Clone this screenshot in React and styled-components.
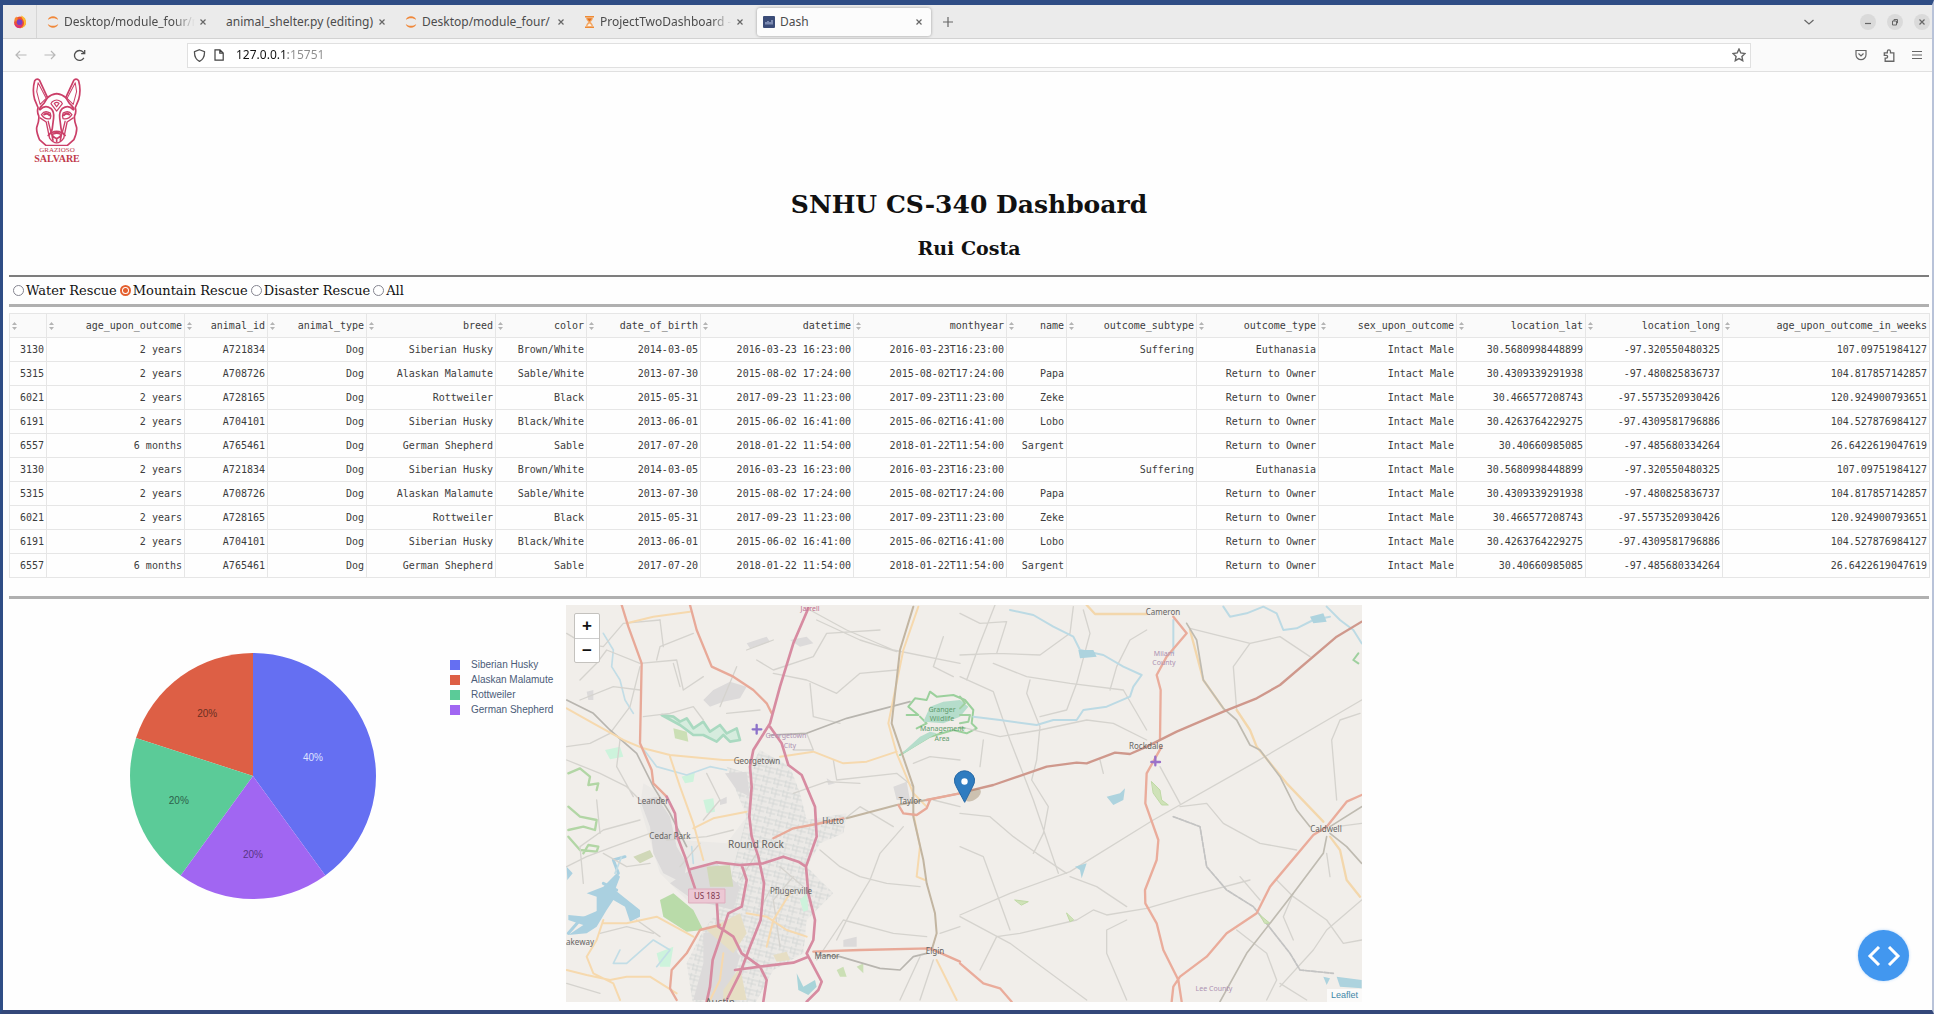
import React, { useState } from "react";
import styled, { createGlobalStyle, css } from "styled-components";

const UI_FONT = '"Noto Sans", "Open Sans", sans-serif';
const SERIF = '"DejaVu Serif", "Liberation Serif", serif';
const MONO = '"DejaVu Sans Mono", "Liberation Mono", monospace';
const SANS = '"Liberation Sans", sans-serif';

const GlobalStyle = createGlobalStyle`
  *, *::before, *::after { box-sizing: border-box; }
  body { margin: 0; background: #fefefe; }
  button { margin: 0; padding: 0; border: 0; background: none; color: inherit; font: inherit; cursor: pointer; }
  svg { display: block; flex: none; }
`;

const BrowserWindow = styled.div`
  display: flex;
  flex-direction: column;
  min-height: 100vh;
  border-style: solid;
  border-color: #2f4d85 #b9c3d9 #34487a #2f4d85;
  border-width: 5px 2px 4px 3px;
  background: #fefefe;
`;

/* ---------- browser chrome ---------- */

const TabBar = styled.div`
  display: flex;
  align-items: center;
  height: 34px;
  background: #ebebeb;
  border-bottom: 1px solid #d2d2d2;
  font: 12px/16px ${UI_FONT};
  color: #4c4c4c;
`;

const PinnedTab = styled.button`
  display: flex;
  align-items: center;
  justify-content: center;
  width: 34px;
  height: 33px;
  border-right: 1px solid #d6d6d6;
`;

const TabList = styled.div`
  display: flex;
  gap: 5px;
  margin-left: 4px;
`;

const Tab = styled.div`
  display: flex;
  align-items: center;
  width: 174px;
  height: 28px;
  padding: 0 7px 0 6px;
  border-radius: 3px;
  ${(p) =>
    p.$active &&
    css`
      background: #fcfcfc;
      box-shadow: 0 0 3px rgba(0, 0, 0, 0.35);
    `}
`;

const TabLabel = styled.button`
  display: flex;
  align-items: center;
  flex: 1;
  gap: 5px;
  min-width: 0;
  overflow: hidden;
  white-space: nowrap;
  ${(p) =>
    p.$fade &&
    css`
      mask-image: linear-gradient(to right, #000 84%, transparent 98%);
    `}
`;

const IconButton = styled.button`
  display: flex;
  align-items: center;
  justify-content: center;
  flex: none;
  width: ${(p) => p.$size || 16}px;
  height: ${(p) => p.$size || 16}px;
  color: ${(p) => p.$color || "#666"};
`;

const WindowControls = styled.div`
  display: flex;
  align-items: center;
  gap: 11px;
  margin-left: auto;
  padding-right: 2px;
`;

const RoundButton = styled(IconButton)`
  border-radius: 50%;
  background: #dadada;
`;

const MenuSlot = styled.div`
  margin-right: 32px;
`;

const Toolbar = styled.div`
  display: flex;
  align-items: center;
  height: 33px;
  padding: 0 7px 0 10px;
  background: #fafafa;
  border-bottom: 1px solid #e0e0e0;
`;

const NavButtons = styled.div`
  display: flex;
  gap: 13px;
  width: 174px;
`;

const AddressBar = styled.div`
  display: flex;
  align-items: center;
  flex: 1;
  height: 25px;
  padding: 0 3px;
  border: 1px solid #e0e0e0;
  background: #fff;
`;

const AddressInput = styled.input`
  flex: 1;
  min-width: 0;
  margin-left: 5px;
  padding: 0;
  border: 0;
  outline: 0;
  font: 12px/18px ${UI_FONT};
  color: transparent;
  background: linear-gradient(to right, #111 52px, #8c8c8c 52px);
  background-clip: text;
  caret-color: #222;
`;

const ToolbarActions = styled.div`
  display: flex;
  justify-content: flex-end;
  gap: 12px;
  width: 174px;
`;

/* ---------- dashboard page ---------- */

const Page = styled.main`
  flex: 1;
  padding: 6px 3px 8px 6px;
  font-family: ${SERIF};
  color: #111;
`;

const LogoLink = styled.a`
  display: flex;
  flex-direction: column;
  align-items: center;
  width: 50px;
  height: 88px;
  margin-left: 23px;
  color: #c0394a;
  font: bold 10px/10px "Liberation Serif", serif;
  text-decoration: none;
`;

const LogoSmall = styled.span`
  font-size: 7px;
  font-weight: normal;
  line-height: 8px;
`;

const Title = styled.h1`
  margin: 23px 0 15px;
  font-size: 25px;
  line-height: 32px;
  text-align: center;
`;

const Author = styled.h2`
  margin: 0 0 15px;
  font-size: 19px;
  line-height: 24px;
  text-align: center;
`;

const Rule = styled.hr`
  height: ${(p) => (p.$thick ? 3 : 2)}px;
  margin: ${(p) => p.$top || 0}px 0 ${(p) => p.$bottom || 0}px;
  border: 0;
  background: ${(p) => (p.$thick ? "#b0b0b0" : "#7d7d7d")};
`;

const RadioRow = styled.div`
  display: flex;
  align-items: center;
  gap: 3px;
  height: 27px;
  padding-left: 4px;
  font-size: 13px;
  line-height: 16px;
`;

const RadioLabel = styled.label`
  display: flex;
  align-items: center;
  gap: 2px;
`;

const Radio = styled.input`
  appearance: none;
  width: 11px;
  height: 11px;
  margin: 0;
  border: 1px solid #858590;
  border-radius: 50%;
  background: #fff;
  &:checked {
    border: 2px solid #e4602f;
    background: radial-gradient(circle, #e4602f 0 2px, #fff 3px);
  }
`;

const DataTable = styled.table`
  width: 100%;
  table-layout: fixed;
  border-collapse: collapse;
  font: 10px/12px ${MONO};
  color: #3c3c3c;
`;

const Col = styled.col`
  width: ${(p) => p.$w}px;
`;

const HeadCell = styled.th`
  height: 24px;
  padding: 0 2px;
  border: 1px solid #e6e6e6;
  background: #fafafa;
  font-weight: normal;
`;

const HeadContent = styled.div`
  display: flex;
  align-items: center;
  justify-content: space-between;
`;

const Cell = styled.td`
  height: 24px;
  padding: 0 2px;
  border: 1px solid #e6e6e6;
  text-align: right;
  white-space: nowrap;
`;

const Panels = styled.div`
  display: grid;
  grid-template-columns: 557fr 796fr 567fr;
`;

const ChartPanel = styled.section`
  display: flex;
  gap: 73px;
  padding: 47px 0 0 120px;
`;

const Legend = styled.ul`
  margin: 5px 0 0;
  padding: 0;
  list-style: none;
  font: 10px/15px ${SANS};
  color: #4b5c78;
`;

const LegendItem = styled.li`
  display: flex;
  align-items: center;
  gap: 11px;
  white-space: nowrap;
  &::before {
    content: "";
    width: 10px;
    height: 10px;
    background: ${(p) => p.$color};
  }
`;

const MapPanel = styled.section`
  position: relative;
  height: 397px;
  overflow: hidden;
  background: #f1eeea;
`;

const ZoomControls = styled.div`
  position: absolute;
  top: 8px;
  left: 8px;
  border: 1px solid #c4c2be;
  border-radius: 2px;
  background: #fff;
`;

const ZoomButton = styled.button`
  display: block;
  width: 24px;
  height: 24px;
  color: #111;
  font: bold 17px/24px ${SANS};
  & + & {
    border-top: 1px solid #ccc;
  }
`;

const Attribution = styled.a`
  position: absolute;
  right: 0;
  bottom: 0;
  padding: 0 4px;
  background: rgba(255, 255, 255, 0.7);
  color: #3e87a8;
  font: 9px/13px ${SANS};
  text-decoration: none;
`;

const DebugButton = styled.button`
  position: fixed;
  right: 25px;
  bottom: 33px;
  display: flex;
  align-items: center;
  justify-content: center;
  width: 51px;
  height: 51px;
  border-radius: 50%;
  background: #4297ef;
  box-shadow: 0 0 3px rgba(66, 151, 239, 0.4);
`;

/* ---------- icons ---------- */

const Stroke = ({ size = 12, w = 1.2, box = 12, children }) => (
  <svg width={size} height={size} viewBox={`0 0 ${box} ${box}`} fill="none" stroke="currentColor" strokeWidth={w}>
    {children}
  </svg>
);

const CloseIcon = () => (
  <Stroke size={8} box={8}>
    <path d="M1.5 1.5l5 5M6.5 1.5l-5 5" />
  </Stroke>
);

const FirefoxIcon = () => (
  <svg width="14" height="14" viewBox="0 0 14 14">
    <circle cx="7" cy="7.4" r="5.9" fill="#f0542f" />
    <path d="M8 .6c3.400 1.200 5.300 4 5 7.200-.5 3.300-3 5.400-6 5.500 3-1.200 4.500-3.500 4-6C10.600 5 8.600 3.600 8 .6z" fill="#fdbb30" />
    <path d="M1.500 4.500C2 3 3 2 3.400 1.600c.2 1 .7 1.700 1.500 2.100L3 7z" fill="#f7872c" />
    <circle cx="6.600" cy="7.200" r="2.900" fill="#7a3fc4" />
    <path d="M1.300 7.500c1 2.500 3 3.400 5.500 3 1.500-.3 2.500-1 3-2-.2 3-2 4.600-4.300 4.500-2.500-.3-4-2.500-4.200-5.500z" fill="#d9307a" />
  </svg>
);

const JupyterIcon = () => (
  <svg width="12" height="14" viewBox="0 0 12 14" fill="#f0883a">
    <path d="M.8 5C1.500 2.500 3.500 1.300 6 1.300S10.500 2.500 11.200 5C9.800 3.700 8 3.200 6 3.200S2.200 3.700.8 5z" />
    <path d="M.8 9c.7 2.500 2.700 3.700 5.200 3.700s4.500-1.200 5.200-3.700c-1.400 1.300-3.200 1.800-5.200 1.800S2.200 10.300.8 9z" />
  </svg>
);

const HourglassIcon = () => (
  <svg width="11" height="14" viewBox="0 0 11 14">
    <path d="M1 1h9v1.500H1zM1 11.500h9V13H1z" fill="#f08a32" />
    <path d="M2 2.500h7c0 2.500-1.500 3.500-2.500 4.500C7.500 8 9 9 9 11.500H2C2 9 3.500 8 4.500 7 3.500 6 2 5 2 2.500z" fill="#f3a765" />
    <path d="M3 3.500h5L5.500 6.500z" fill="#e2701c" />
    <path d="M3.500 11c.3-1.300 1-1.900 2-2.400 1 .5 1.700 1.100 2 2.400z" fill="#fff2e2" />
  </svg>
);

const DashIcon = () => (
  <svg width="12" height="12" viewBox="0 0 12 12">
    <rect width="12" height="12" rx="1" fill="#3b4c78" />
    <path d="M3 8.500V6M5 8.500V5M7 8.500V6M9 8.500V4" stroke="#a9b6da" strokeWidth="1.200" />
  </svg>
);

const DogLogo = () => (
  <svg width="50" height="68" viewBox="36 22 148 201" fill="none" stroke="#cb3f68" strokeWidth="5" strokeLinejoin="round" strokeLinecap="round">
    <path d="M82 80L58 28Q50 22 44 30Q36 58 44 86L54 110Q50 122 56 134Q58 148 50 168Q48 180 58 204L78 222H140L160 204Q170 182 168 168Q160 148 162 134Q168 122 164 110L174 86Q182 58 174 30Q168 22 160 28L136 80" />
    <path d="M54 36L50 62L60 100L78 82zM164 36L168 62L158 100L140 82z" strokeWidth="3" />
    <path d="M82 80Q92 70 109 68Q126 70 136 80L146 96M82 80L72 96Q62 104 58 114M146 96Q156 104 160 114" />
    <path d="M96 92Q109 82 122 92L126 98L109 120L92 98zM102 97Q109 91 116 97L109 107z" strokeWidth="3.500" />
    <path d="M60 116Q74 100 92 112Q102 122 100 140L96 172Q94 186 84 192M158 116Q144 100 126 112Q116 122 118 140L122 172Q124 186 134 192" />
    <path d="M64 130Q74 116 90 126Q94 136 90 142Q74 146 64 130zM154 130Q144 116 128 126Q124 136 128 142Q144 146 154 130z" strokeWidth="4" />
    <path d="M72 130Q80 124 88 132M146 130Q138 124 130 132" strokeWidth="6" />
    <path d="M60 140L78 152L88 200Q98 214 109 214Q120 214 130 200L140 152L158 140M84 150L92 182M134 150L126 182" strokeWidth="4" />
    <path d="M94 184Q109 176 124 184Q124 194 109 202Q94 194 94 184zM98 188Q109 182 120 188M109 202V210M94 184L98 206M124 184L120 206" strokeWidth="5" />
  </svg>
);

const SortIcon = () => (
  <svg width="5" height="8" viewBox="0 0 5 8" fill="#b4b4b4">
    <path d="M2.500 0L5 3H0zM2.500 8L5 5H0z" />
  </svg>
);

/* ---------- chart ---------- */

const BREEDS = [
  { name: "Siberian Husky", share: 40, color: "#656ff2", from: 0, text: "#dfe2ff" },
  { name: "Alaskan Malamute", share: 20, color: "#dd5f45", from: 80, text: "#6b2f22" },
  { name: "Rottweiler", share: 20, color: "#5bcb98", from: 60, text: "#2d614b" },
  { name: "German Shepherd", share: 20, color: "#a166f2", from: 40, text: "#583585" },
];

const polar = (pct, r) => {
  const a = (pct / 100) * Math.PI * 2;
  return [124 + Math.sin(a) * r, 124 - Math.cos(a) * r];
};

const PieChart = () => (
  <svg width="248" height="248" viewBox="0 0 248 248" role="img" aria-label="Breed share">
    {BREEDS.map((b) => {
      const [x1, y1] = polar(b.from, 123);
      const [x2, y2] = polar(b.from + b.share, 123);
      const [tx, ty] = polar(b.from + b.share / 2, b.share === 40 ? 63 : 78);
      return (
        <g key={b.name}>
          <path d={`M124 124L${x1} ${y1}A123 123 0 0 1 ${x2} ${y2}Z`} fill={b.color} />
          <text x={tx} y={ty + 4} textAnchor="middle" fontFamily={SANS} fontSize="10" fill={b.text}>
            {b.share}%
          </text>
        </g>
      );
    })}
  </svg>
);

/* ---------- map ---------- */

const PLACES = [
  ["Georgetown", 191, 159, 8],
  ["Leander", 87, 199, 8],
  ["Cedar Park", 104, 234, 8],
  ["Round Rock", 190, 243, 10],
  ["Hutto", 267, 219, 8],
  ["Pflugerville", 225, 289, 8],
  ["Taylor", 344, 199, 8],
  ["Manor", 261, 354, 8],
  ["Elgin", 369, 349, 8],
  ["Lakeway", 12, 340, 8],
  ["Austin", 154, 401, 10],
  ["Cameron", 597, 10, 8],
  ["Rockdale", 580, 144, 8],
  ["Caldwell", 760, 227, 8],
];

const MapDrawing = () => (
  <svg width="100%" height="100%" viewBox="0 0 796 397" preserveAspectRatio="xMidYMid slice" fill="none" strokeLinejoin="round" strokeLinecap="round">
    <defs>
      <pattern id="streets" width="34" height="30" patternUnits="userSpaceOnUse" patternTransform="rotate(14)">
        <path d="M0 6h34M8 0v20M20 6v24M8 18h26" stroke="#ccd2d0" strokeWidth="2.200" />
      </pattern>
    </defs>
    <g transform="translate(-6 -5) scale(.33333)">
      {/* built-up areas */}
      <path d="M500 500L560 520L600 450L690 500L720 580L740 660L860 640L850 700L780 730L740 800L820 880L740 960L730 1060L640 1110L580 1220H400L380 1090L430 990L380 900L300 820L270 720L240 620L250 550L320 590L360 720L500 730L560 650z" fill="#ebe9e6" />
      <path d="M500 500L560 520L600 450L690 500L720 580L740 660L860 640L850 700L780 730L740 800L820 880L740 960L730 1060L640 1110L580 1220H400L380 1090L430 990L500 900L520 800L560 650z" fill="url(#streets)" />
      <g fill="#dcdada">
        <path d="M430 300L460 270L510 245L560 260L540 295L490 305L450 320z" />
        <path d="M240 600L290 590L330 650L350 740L380 790L370 850L310 820L280 760L270 680z" />
        <path d="M495 520L560 515L570 590L530 570zM330 850L390 810L470 790L540 860L520 930L400 900zM430 1000L490 990L540 1070L500 1200H400L430 1090z" />
        <path d="M560 130L620 110L630 125L570 145zM690 120L740 110L760 130L720 140zM850 1020L890 1010L890 1040L850 1040zM1000 560L1040 545L1050 600L1010 600zM80 275L100 270L100 300L85 300zM480 600L500 590L500 610L480 615zM800 535L825 550L805 555z" />
      </g>
      {/* parks */}
      <path d="M300 900L340 880L400 930L430 990L380 995L310 950z" fill="#b9dba9" />
      <path d="M440 800L510 795L520 860L450 860zM220 770L270 750L280 770L240 790z" fill="#d0d8b8" />
      <path d="M135 450L180 440L190 470L150 478zM430 600L460 595L465 635L440 640zM365 530L405 515L400 545L375 550zM720 900L740 880L745 930L730 935zM290 1060L340 1040L330 1100L300 1100z" fill="#cdf3dc" />
      <path d="M440 990L540 940L560 1000L520 1060zM640 1065L680 1055L690 1080L650 1085zM490 1170L540 1100L560 1200H490z" fill="#e6dec4" />
      <path d="M340 385L380 395L385 425L345 415zM830 1110L850 1100L860 1130L840 1130zM890 1100L910 1090L910 1120z" fill="#cbdfb5" />
      <path d="M25 520L60 505L90 530L85 555L115 550L110 570M25 620L60 650L110 660L105 690L70 680L25 690M25 710L60 750L110 755L115 740L85 735L70 760" stroke="#b2d6a5" strokeWidth="7" />
      <path d="M305 345L340 350L360 365L380 355L400 385L430 365L450 395L480 375L500 400L530 385L540 420L510 425L490 405L470 425L430 405L400 405L360 375z" stroke="#a9d9c0" strokeWidth="8" fill="#d6ecde" />
      {/* wildlife area */}
      <path d="M1040 345L1075 345L1045 320L1065 295L1100 300L1110 275L1130 290L1180 285L1215 300L1240 330L1235 370L1250 385L1220 400L1180 390L1110 410L1060 440L1020 465M1080 350L1100 370L1070 385" stroke="#9bd09c" strokeWidth="6" />
      <path d="M1110 320L1150 305L1200 300L1225 320L1200 350L1150 370L1090 365zM1080 410L1110 395L1130 400L1040 455L1020 465z" fill="#b5ddcb" />
      {/* water */}
      <path d="M80 880L130 860L170 820L180 830L165 870L190 890L240 930L240 950L210 965L195 920L160 900L140 930L110 980L80 1000L25 1005L70 975L25 960L25 945L80 950L110 935L110 890zM20 800L38 820L22 840z" fill="#aad0e0" />
      <path d="M175 820L160 780L195 770M130 930L60 960L25 1000M170 870L130 850" stroke="#aad0e0" strokeWidth="9" />
      <path d="M710 1120L730 1160L765 1140L770 1160L745 1185L715 1170z" fill="#a8d4d9" />
      <path d="M130 100L160 150L155 200L180 240L195 300L220 340M245 440L290 500L380 525L450 500L500 510M180 1050L160 1090L200 1090L280 1020L330 1050L290 1100M165 820L185 770M395 740L400 790" stroke="#c2dde6" strokeWidth="5" />
      {/* minor roads */}
      <g stroke="#d5d3ce" strokeWidth="4">
        <path d="M20 100L70 130L130 140L190 70L300 60M60 240L110 190L140 150L240 190L350 180L370 270L430 230M20 440L90 430L150 400L210 320L240 200M290 180L300 140L400 100M250 350L330 340L400 320L430 360M20 800L80 770L160 740L270 700M70 850L60 740L130 690L240 660M130 760L200 800L270 790M530 200L480 320M590 180L640 210L760 170L800 100L960 90" />
        <path d="M750 30L860 90L1000 150L1200 190M770 60L900 120L1010 155M640 220L740 240L830 280L900 220L1010 210M750 250L760 350L840 370M700 450L760 450L740 400M820 480L830 540L1010 520L1060 560M700 580L800 545L900 550M850 660L900 620L1000 680M780 750L840 800L900 830L980 850L1080 860M830 1020L870 940L930 840L960 760L1030 680M770 1080L850 960L1000 1000L1100 1010M1060 490L1110 470L1200 480M1150 110L1120 200L1180 230" />
        <path d="M1080 1070L1020 1200M1120 1080L1080 1200M1140 1000L1200 980M1120 600L1200 620M420 730L360 800M540 840L590 760M630 870L600 930M660 800L730 860M660 1040L640 900L700 830" />
        <path d="M300 60L310 140M340 190L360 260M240 270L160 260L60 300M20 480L120 520L200 560L240 600M180 420L170 500L220 590M440 520L480 600L430 660M320 720L440 710L520 690M120 1000L200 980L280 1000M230 960L300 1010M500 340L600 330M560 150L640 120M110 600L120 700M20 1150L120 1180" />
      </g>
      <path d="M20 300L100 340L150 390L230 460L280 560L330 640L380 740M630 405L740 400L860 355L1050 305M1100 1060L1060 1070L1020 1110L960 1105L840 1070L770 1065" stroke="#b8b5af" strokeWidth="5" />
      {/* secondary roads */}
      <g stroke="#f6d9ae" strokeWidth="6">
        <path d="M20 325L100 370L190 420L250 445L330 465L490 480L540 480M660 470L760 455L850 490L920 485L1010 455M200 70L280 50L390 35M330 470L360 560L400 670L430 780M400 685L460 655L560 635M1075 20L1030 150L985 370L1010 460L1060 580L1100 620M1060 640L1080 740L1070 830L1095 840" />
        <path d="M20 1110L80 1125L150 1140L200 1130L270 1130L350 1180M130 960L110 1020L80 1070L100 1120L160 1150L180 1200M130 970L200 970L290 950L400 1010M560 940L620 950L680 990L740 1010M690 880L640 960L620 1040M490 1060L480 1140L450 1200M1130 1080L1190 1200" />
      </g>
      <path d="M1060 20L1020 150L995 370L1060 560L1060 650L1090 780L1100 850L1125 940L1130 1000L1115 1050M860 655L1010 615L1100 600L1200 580" stroke="#c2b5a1" strokeWidth="6" />
      {/* primary roads */}
      <path d="M185 15L205 80L245 190L240 430L275 510L280 550L320 590M390 15L410 90L455 200L520 230L580 270L620 310L635 340M640 715L700 685L770 672L850 655M1100 600L1200 580M1015 615L1030 640L1070 645L1100 625L1110 600M760 1055L900 1050L1110 1045L1200 1085M480 975L420 990L380 1060L335 1110L330 1165L350 1200" stroke="#e8a998" strokeWidth="7" />
      {/* motorways */}
      <path d="M745 25L700 130L660 260L630 370L580 450L570 500L575 560L568 650L575 710L595 770L612 850L602 960L570 1040L540 1120L500 1200M630 380L665 430L685 495L725 525L765 620L770 710L738 800L745 880L765 960L760 1020L740 1060L785 1145L775 1170L740 1205M320 590L345 640L352 710L375 770L390 820L405 865M390 808L470 787L540 795L610 790L670 770L715 785L738 800M470 900L475 980L520 1010L545 1060L600 1100L620 1140L610 1205M545 795L560 840L545 920L505 940L485 1000L458 1080L450 1160L440 1205M525 1110L600 1100L700 1088L745 1070" stroke="#d78ba1" strokeWidth="8" />
      <path d="M590 375v26M578 388h26" stroke="#8c71c9" strokeWidth="7" />
    </g>
    <g transform="translate(394 -5) scale(.33333)">
      <g stroke="#d5d3ce" strokeWidth="4">
        <path d="M105 15L60 130L20 240M0 40L60 70L140 65L110 160L0 165M0 230L100 275L150 420L220 600L295 820M340 20L330 100L240 165L110 160M100 190L200 230L330 250L490 270L560 390M370 30L390 100L350 250L320 330L240 350M210 240L200 280L240 380L230 480L215 540L265 620L250 700L220 760M560 90L510 120L470 200L450 270" />
        <path d="M0 380L120 410L240 390L380 360L460 370L560 420M0 640L90 650L160 710L230 760L320 820M0 740L70 770L110 880L150 990M0 945L150 880L330 815L580 660L880 490L1205 300M330 830L410 860L500 920M0 950L150 1030L380 1200M60 1110L110 1010L180 1000L350 960L400 930L440 945L560 925L680 890L870 840M690 85L870 130L960 110L1050 170M870 130L820 200L830 330M1200 340L1140 360L1115 420L1130 600M600 500L660 610M640 650L720 680L740 800L800 870L880 920L990 1060L1020 1110L1120 1120M660 620L740 610L790 670L900 730L1010 750" />
        <path d="M840 830L900 900M950 840L1000 890L1100 960L1150 1030L1205 1020M830 990L920 1060L950 1140L920 1200M1205 900L1100 990L1060 1050L960 1160M1000 880L970 950L1000 1020M500 960L440 990L440 1060L500 1200M1100 760L1110 830M420 480L430 520M60 500L70 420M960 1150L1040 1200M1130 680L1205 670" />
      </g>
      <path d="M640 650L720 680L740 800L800 870L880 920L990 1060L1020 1110L1120 1120" stroke="#c3c3c3" strokeWidth="5" strokeDasharray="14 5" />
      <path d="M640 160L640 60M150 30L220 45L280 80L340 110L360 150L430 165L490 200L545 225L520 260L510 290L440 320L370 330L350 360L280 360L230 375L120 360L40 350M790 20L810 50L860 40L910 20L950 40L970 90L1010 85L1060 60L1110 50M1100 20L1140 60L1180 90L1205 130" stroke="#bcdae4" strokeWidth="6" />
      <path d="M440 590L480 580L495 565L490 600L460 615zM345 800L380 790L365 835L360 810zM1130 1130L1205 1140V1165L1140 1160zM355 150L400 150L410 170L360 175zM1050 50L1090 40L1100 65L1060 70zM1090 1130L1110 1135L1100 1155z" fill="#add3de" />
      <path d="M575 545L600 570L605 600L625 615L605 615L580 580zM165 900L205 905L185 915zM320 940L330 965L340 960zM900 945L930 970L915 970z" fill="#cfe2b8" stroke="#bfd9a5" strokeWidth="3" />
      <path d="M0 290L15 310L0 325M0 345L30 345L25 365L0 370M0 385H14M1195 160L1180 180L1195 190" stroke="#9fd09f" strokeWidth="6" />
      <path d="M380 15L405 42H560M690 90L730 240L790 325M830 330L870 390L890 440L980 550L1090 665M1110 710L1140 750L1160 840L1200 890" stroke="#f3d7ac" strokeWidth="7" />
      <path d="M680 70L710 120L730 240L790 325L830 360L870 435L900 450L960 530L1010 630L1050 680M1100 710L1090 760L1000 880L860 1060L780 1205M1110 700L1160 740L1205 790M1110 680L1205 620" stroke="#bfbbb1" strokeWidth="5" />
      <path d="M640 50L680 100L620 170L590 225L602 270L600 420M605 440L560 520L556 610L595 720L590 780L555 870L556 910L590 970L610 1050L655 1140L665 1205M1205 585L1160 605L1100 680L1060 705L930 860L890 940L800 1000L740 1070L660 1130L640 1160L635 1205M0 1090L70 1150L120 1165L155 1205" stroke="#eaac9b" strokeWidth="7" />
      <path d="M30 572L100 555L260 500L350 488L380 490L465 458L510 462L560 440L650 395L790 335L890 295L960 255L1130 110L1205 65" stroke="#cf988c" strokeWidth="7" />
      <path d="M586 470v26M574 486h26" stroke="#9b71c9" strokeWidth="7" />
    </g>
    <rect x="123" y="284" width="36" height="14" fill="#ecc8d4" stroke="#dfadbe" />
    <g fontFamily={UI_FONT} textAnchor="middle" stroke="none">
      <text x="141" y="294" fontSize="8" fill="#803850">US 183</text>
      {PLACES.map(([name, x, y, size]) => (
        <text key={name} x={x} y={y} fontSize={size} fill="#666462">{name}</text>
      ))}
      <g fontSize="7" fill="#ad92b2">
        <text x="220" y="133">Georgetown</text>
        <text x="224" y="143">City</text>
        <text x="598" y="51">Milam</text>
        <text x="598" y="60">County</text>
        <text x="648" y="386">Lee County</text>
        <text x="244" y="6" fill="#c06d8d">Jarrell</text>
      </g>
      <g fontSize="7" fill="#5f9b6c">
        <text x="376" y="107">Granger</text>
        <text x="376" y="116">Wildlife</text>
        <text x="376" y="126">Management</text>
        <text x="376" y="136">Area</text>
      </g>
    </g>
    <ellipse cx="407" cy="190" rx="9" ry="5" fill="#a08a6a" opacity=".45" transform="rotate(-35 407 190)" />
    <path d="M398.500 197L390.500 182Q388 178 388.500 174A10.200 10.200 0 0 1 408.500 174Q409 178 406.500 182z" fill="#2f7cc0" stroke="#2668a5" />
    <circle cx="398.500" cy="176.500" r="3.200" fill="#fff" />
  </svg>
);

/* ---------- data ---------- */

const COLUMNS = [
  ["", 37],
  ["age_upon_outcome", 138],
  ["animal_id", 83],
  ["animal_type", 99],
  ["breed", 129],
  ["color", 91],
  ["date_of_birth", 114],
  ["datetime", 153],
  ["monthyear", 153],
  ["name", 60],
  ["outcome_subtype", 130],
  ["outcome_type", 122],
  ["sex_upon_outcome", 138],
  ["location_lat", 129],
  ["location_long", 137],
  ["age_upon_outcome_in_weeks", 207],
];

const ANIMALS = [
  ["3130", "2 years", "A721834", "Dog", "Siberian Husky", "Brown/White", "2014-03-05", "2016-03-23 16:23:00", "2016-03-23T16:23:00", "", "Suffering", "Euthanasia", "Intact Male", "30.5680998448899", "-97.320550480325", "107.09751984127"],
  ["5315", "2 years", "A708726", "Dog", "Alaskan Malamute", "Sable/White", "2013-07-30", "2015-08-02 17:24:00", "2015-08-02T17:24:00", "Papa", "", "Return to Owner", "Intact Male", "30.4309339291938", "-97.480825836737", "104.817857142857"],
  ["6021", "2 years", "A728165", "Dog", "Rottweiler", "Black", "2015-05-31", "2017-09-23 11:23:00", "2017-09-23T11:23:00", "Zeke", "", "Return to Owner", "Intact Male", "30.466577208743", "-97.5573520930426", "120.924900793651"],
  ["6191", "2 years", "A704101", "Dog", "Siberian Husky", "Black/White", "2013-06-01", "2015-06-02 16:41:00", "2015-06-02T16:41:00", "Lobo", "", "Return to Owner", "Intact Male", "30.4263764229275", "-97.4309581796886", "104.527876984127"],
  ["6557", "6 months", "A765461", "Dog", "German Shepherd", "Sable", "2017-07-20", "2018-01-22 11:54:00", "2018-01-22T11:54:00", "Sargent", "", "Return to Owner", "Intact Male", "30.40660985085", "-97.485680334264", "26.6422619047619"],
];

const ROWS = [...ANIMALS, ...ANIMALS];

const TABS = [
  { label: "Desktop/module_four/m", icon: <JupyterIcon />, fade: true },
  { label: "animal_shelter.py (editing)" },
  { label: "Desktop/module_four/", icon: <JupyterIcon /> },
  { label: "ProjectTwoDashboard - J", icon: <HourglassIcon />, fade: true },
  { label: "Dash", icon: <DashIcon />, active: true },
];

const FILTERS = ["Water Rescue", "Mountain Rescue", "Disaster Rescue", "All"];

/* ---------- sections ---------- */

const Chrome = () => (
  <header>
    <TabBar>
      <PinnedTab aria-label="Firefox View"><FirefoxIcon /></PinnedTab>
      <TabList>
        {TABS.map((t, i) => (
          <Tab key={i} $active={t.active}>
            <TabLabel $fade={t.fade}>{t.icon}{t.label}</TabLabel>
            <IconButton $size={10} aria-label="Close tab"><CloseIcon /></IconButton>
          </Tab>
        ))}
      </TabList>
      <IconButton $size={34} aria-label="New tab">
        <Stroke size={10} box={10}><path d="M5 0v10M0 5h10" /></Stroke>
      </IconButton>
      <WindowControls>
        <MenuSlot>
          <IconButton aria-label="List all tabs">
            <Stroke><path d="M1.500 4L6 8l4.500-4" /></Stroke>
          </IconButton>
        </MenuSlot>
        <RoundButton aria-label="Minimize">
          <Stroke size={8} box={8}><path d="M1 5.500h6" /></Stroke>
        </RoundButton>
        <RoundButton aria-label="Restore">
          <Stroke size={8} box={8} w={1}><path d="M1.500 3h4v4h-4zM3 3V1.500h3.500V5H5.500" /></Stroke>
        </RoundButton>
        <RoundButton aria-label="Close"><CloseIcon /></RoundButton>
      </WindowControls>
    </TabBar>
    <Toolbar>
      <NavButtons>
        <IconButton $color="#b8b8b8" aria-label="Back"><Stroke><path d="M11.500 6H1M5 2L1 6l4 4" /></Stroke></IconButton>
        <IconButton $color="#b8b8b8" aria-label="Forward"><Stroke><path d="M.5 6H11M7 2l4 4-4 4" /></Stroke></IconButton>
        <IconButton $color="#505050" aria-label="Reload">
          <Stroke size={13}><path d="M10 8.200A4.600 4.600 0 1 1 9.300 2.800L10.600 4M10.800 1v3.300H7.500" /></Stroke>
        </IconButton>
      </NavButtons>
      <AddressBar>
        <IconButton $color="#505050" aria-label="Tracking protection">
          <Stroke size={13}><path d="M6 .7L10.600 2.400C10.800 6.500 9.500 9.600 6 11.400 2.500 9.600 1.200 6.500 1.400 2.400z" /></Stroke>
        </IconButton>
        <IconButton $size={24} $color="#404040" aria-label="Site information">
          <Stroke><path d="M2 .8h5L10.200 4v7.200H2zM6.800.8v3.400h3.400" /></Stroke>
        </IconButton>
        <AddressInput aria-label="Address" defaultValue="127.0.0.1:15751" />
        <IconButton aria-label="Bookmark">
          <Stroke size={14}><path d="M6 .9l1.500 3.300 3.700.5-2.700 2.500.7 3.700L6 9.100l-3.200 1.800.7-3.700L.8 4.700l3.700-.5z" /></Stroke>
        </IconButton>
      </AddressBar>
      <ToolbarActions>
        <IconButton aria-label="Pocket">
          <Stroke><path d="M1 1.500h10v4.200a5 5 0 0 1-10 0zM3.500 4.500L6 7l2.500-2.500" /></Stroke>
        </IconButton>
        <IconButton aria-label="Extensions">
          <Stroke size={13}><path d="M4 3.500V2.200a1.400 1.400 0 0 1 2.900 0v1.300H10v7.800H2V8.500h1a1.300 1.300 0 0 0 0-2.600H1.200V3.500z" /></Stroke>
        </IconButton>
        <IconButton aria-label="Menu"><Stroke><path d="M1 2.500h10M1 6h10M1 9.500h10" /></Stroke></IconButton>
      </ToolbarActions>
    </Toolbar>
  </header>
);

const RescueFilter = () => {
  const [selected, setSelected] = useState("Mountain Rescue");
  return (
    <RadioRow role="radiogroup" aria-label="Rescue type">
      {FILTERS.map((f) => (
        <RadioLabel key={f}>
          <Radio type="radio" name="rescue" checked={selected === f} onChange={() => setSelected(f)} />
          {f}
        </RadioLabel>
      ))}
    </RadioRow>
  );
};

const AnimalTable = () => (
  <DataTable>
    <colgroup>
      {COLUMNS.map(([name, w]) => <Col key={name} $w={w} />)}
    </colgroup>
    <thead>
      <tr>
        {COLUMNS.map(([name]) => (
          <HeadCell key={name} scope="col">
            <HeadContent>
              <button aria-label={`Sort by ${name || "index"}`}><SortIcon /></button>
              {name}
            </HeadContent>
          </HeadCell>
        ))}
      </tr>
    </thead>
    <tbody>
      {ROWS.map((row, i) => (
        <tr key={i}>{row.map((v, j) => <Cell key={j}>{v}</Cell>)}</tr>
      ))}
    </tbody>
  </DataTable>
);

export default function App() {
  return (
    <BrowserWindow>
      <GlobalStyle />
      <Chrome />
      <Page>
        <LogoLink href="#home">
          <DogLogo />
          <LogoSmall>GRAZIOSO</LogoSmall>
          SALVARE
        </LogoLink>
        <Title>SNHU CS-340 Dashboard</Title>
        <Author>Rui Costa</Author>
        <Rule />
        <RescueFilter />
        <Rule $thick $bottom={6} />
        <AnimalTable />
        <Rule $thick $top={18} $bottom={6} />
        <Panels>
          <ChartPanel>
            <PieChart />
            <Legend>
              {BREEDS.map((b) => <LegendItem key={b.name} $color={b.color}>{b.name}</LegendItem>)}
            </Legend>
          </ChartPanel>
          <MapPanel aria-label="Map">
            <MapDrawing />
            <ZoomControls>
              <ZoomButton aria-label="Zoom in">+</ZoomButton>
              <ZoomButton aria-label="Zoom out">−</ZoomButton>
            </ZoomControls>
            <Attribution href="#leaflet">Leaflet</Attribution>
          </MapPanel>
        </Panels>
      </Page>
      <DebugButton aria-label="Dash dev tools">
        <svg width="34" height="20" viewBox="0 0 34 20" fill="none" stroke="#fff" strokeWidth="3">
          <path d="M12 1L3 10l9 9M22 1l9 9-9 9" />
        </svg>
      </DebugButton>
    </BrowserWindow>
  );
}
